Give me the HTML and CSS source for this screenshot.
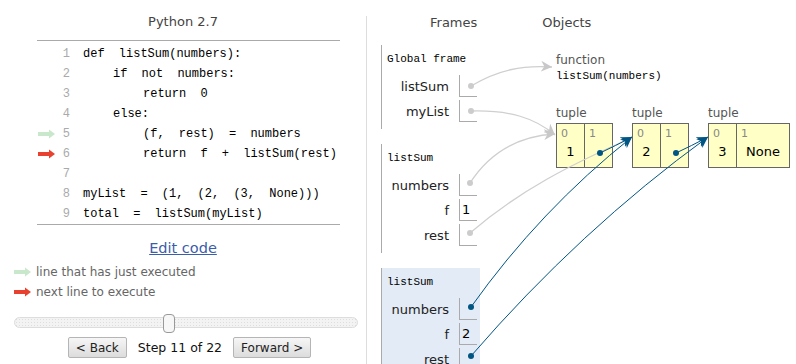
FILE: index.html
```html
<!DOCTYPE html>
<html lang="en">
<head>
    <meta charset="UTF-8">
    <title>Python Tutor - listSum</title>
    <link rel="stylesheet" href="styles.css">
</head>
<body>
    <div class="page">
        <section class="code-panel">
            <div class="lang">Python 2.7</div>

            <div class="code">
                <div class="line"><span class="mark"></span><span class="num">1</span><span class="src">def listSum(numbers):</span></div>
                <div class="line"><span class="mark"></span><span class="num">2</span><span class="src in1">if not numbers:</span></div>
                <div class="line"><span class="mark"></span><span class="num">3</span><span class="src in2">return 0</span></div>
                <div class="line"><span class="mark"></span><span class="num">4</span><span class="src in1">else:</span></div>
                <div class="line">
                    <span class="mark">
                        <svg width="17" height="10" viewBox="0 0 17 10"><rect x="0" y="3" width="12" height="4" fill="#c9e7cb"/><path d="M11 0.5 L17 5 L11 9.5 Z" fill="#c9e7cb"/></svg>
                    </span><span class="num">5</span><span class="src in2">(f, rest) = numbers</span>
                </div>
                <div class="line">
                    <span class="mark">
                        <svg width="17" height="10" viewBox="0 0 17 10"><rect x="0" y="3" width="12" height="4" fill="#e8412f"/><path d="M11 0.5 L17 5 L11 9.5 Z" fill="#e8412f"/></svg>
                    </span><span class="num">6</span><span class="src in2">return f + listSum(rest)</span>
                </div>
                <div class="line"><span class="mark"></span><span class="num">7</span><span class="src"></span></div>
                <div class="line"><span class="mark"></span><span class="num">8</span><span class="src">myList = (1, (2, (3, None)))</span></div>
                <div class="line"><span class="mark"></span><span class="num">9</span><span class="src">total = listSum(myList)</span></div>
            </div>

            <div class="edit"><a href="#">Edit code</a></div>

            <div class="legend">
                <div class="legend-row">
                    <svg width="17" height="10" viewBox="0 0 17 10"><rect x="0" y="3" width="12" height="4" fill="#c9e7cb"/><path d="M11 0.5 L17 5 L11 9.5 Z" fill="#c9e7cb"/></svg>
                    <span>line that has just executed</span>
                </div>
                <div class="legend-row">
                    <svg width="17" height="10" viewBox="0 0 17 10"><rect x="0" y="3" width="12" height="4" fill="#e8412f"/><path d="M11 0.5 L17 5 L11 9.5 Z" fill="#e8412f"/></svg>
                    <span>next line to execute</span>
                </div>
            </div>

            <div class="slider">
                <div class="handle"></div>
            </div>

            <div class="nav">
                <button class="btn">&lt; Back</button>
                <span class="step">Step 11 of 22</span>
                <button class="btn">Forward &gt;</button>
            </div>
        </section>

        <div class="divider"></div>

        <section class="viz">
            <div class="viz-head">
                <span class="head-frames">Frames</span>
                <span class="head-objects">Objects</span>
            </div>

            <div class="frames">
                <div class="frame">
                    <div class="frame-title">Global frame</div>
                    <div class="var"><span class="var-name">listSum</span><span class="var-val"></span></div>
                    <div class="var"><span class="var-name">myList</span><span class="var-val"></span></div>
                </div>

                <div class="frame">
                    <div class="frame-title">listSum</div>
                    <div class="var"><span class="var-name">numbers</span><span class="var-val"></span></div>
                    <div class="var"><span class="var-name">f</span><span class="var-val">1</span></div>
                    <div class="var"><span class="var-name">rest</span><span class="var-val"></span></div>
                </div>

                <div class="frame active">
                    <div class="frame-title">listSum</div>
                    <div class="var"><span class="var-name">numbers</span><span class="var-val"></span></div>
                    <div class="var"><span class="var-name">f</span><span class="var-val">2</span></div>
                    <div class="var"><span class="var-name">rest</span><span class="var-val"></span></div>
                </div>
            </div>

            <!-- heap objects sit on the free canvas -->
            <div class="obj func-obj">
                <div class="type-label">function</div>
                <div class="func-sig">listSum(numbers)</div>
            </div>

            <div class="obj tuple-obj t1">
                <div class="type-label">tuple</div>
                <div class="tuple">
                    <div class="tcell"><div class="idx">0</div><div class="tval">1</div></div>
                    <div class="tcell"><div class="idx">1</div><div class="tval"></div></div>
                </div>
            </div>

            <div class="obj tuple-obj t2">
                <div class="type-label">tuple</div>
                <div class="tuple">
                    <div class="tcell"><div class="idx">0</div><div class="tval">2</div></div>
                    <div class="tcell"><div class="idx">1</div><div class="tval"></div></div>
                </div>
            </div>

            <div class="obj tuple-obj t3">
                <div class="type-label">tuple</div>
                <div class="tuple">
                    <div class="tcell"><div class="idx">0</div><div class="tval">3</div></div>
                    <div class="tcell wide"><div class="idx">1</div><div class="tval">None</div></div>
                </div>
            </div>

            <svg class="arrows" width="429" height="364" viewBox="367 0 429 364">
                <defs>
                    <marker id="headGrey" viewBox="0 0 10 10" refX="10" refY="5" markerWidth="11" markerHeight="11" markerUnits="userSpaceOnUse" orient="auto">
                        <path d="M0 0 L10 5 L0 10 L3 5 Z" fill="#c8c8c8"/>
                    </marker>
                    <marker id="headBlue" viewBox="0 0 10 10" refX="10" refY="5" markerWidth="11" markerHeight="11" markerUnits="userSpaceOnUse" orient="auto">
                        <path d="M0 0 L10 5 L0 10 L3 5 Z" fill="#005583"/>
                    </marker>
                </defs>

                <!-- pointers that are no longer current -->
                <g fill="none" stroke="#cfcfcf" stroke-width="1.3">
                    <path d="M471 86 C498 70 522 65 552 67" marker-end="url(#headGrey)"/>
                    <path d="M471 111 C510 110 535 118 555 135" marker-end="url(#headGrey)"/>
                    <path d="M470 183 C490 152 520 136 555 134" marker-end="url(#headGrey)"/>
                    <path d="M470 233 C520 190 570 165 631 138"/>
                </g>
                <g fill="#cccccc">
                    <circle cx="471" cy="86" r="3"/>
                    <circle cx="471" cy="111" r="3"/>
                    <circle cx="470" cy="183" r="3"/>
                    <circle cx="470" cy="233" r="3"/>
                </g>

                <!-- pointers from the current frame -->
                <g fill="none" stroke="#005583" stroke-width="1">
                    <path d="M600 153 Q615 146 632 137" marker-end="url(#headBlue)"/>
                    <path d="M676 153 Q691 146 708 137" marker-end="url(#headBlue)"/>
                    <path d="M471 307 Q540 210 632 137" marker-end="url(#headBlue)"/>
                    <path d="M471 356 Q580 230 708 137" marker-end="url(#headBlue)"/>
                </g>
                <g fill="#005583">
                    <circle cx="600" cy="153" r="3"/>
                    <circle cx="676" cy="153" r="3"/>
                    <circle cx="471" cy="307" r="3"/>
                    <circle cx="471" cy="356" r="3"/>
                </g>
            </svg>
        </section>
    </div>
</body>
</html>
```

FILE: styles.css
```css
* {
    margin: 0;
    padding: 0;
    box-sizing: border-box;
}

body {
    font-family: 'DejaVu Sans', Verdana, sans-serif;
    background: white;
    color: #000;
    width: 796px;
    height: 364px;
    overflow: hidden;
}

.page {
    display: flex;
    height: 364px;
}

/* ---- code panel ---- */

.code-panel {
    width: 366px;
    flex-shrink: 0;
}

.lang {
    padding-top: 14px;
    font-size: 13px;
    line-height: 16px;
    text-align: center;
    color: #444;
}

.code {
    margin: 10px 26px 0 37px;
    padding-top: 3px;
    border-top: 1px solid #aaa;
    border-bottom: 1px solid #aaa;
    font-family: 'Liberation Mono', monospace;
    font-size: 12px;
}

.line {
    display: flex;
    align-items: center;
    height: 20px;
    white-space: pre;
}

.mark {
    width: 21px;
    height: 20px;
    display: flex;
    align-items: center;
    padding-left: 1px;
}

.num {
    width: 12px;
    text-align: right;
    color: #aaa;
}

.src {
    padding-left: 13px;
    word-spacing: 7px;
}

.src.in1 {
    padding-left: 43px;
}

.src.in2 {
    padding-left: 73px;
}

.edit {
    margin-top: 14px;
    text-align: center;
    font-size: 14.5px;
    line-height: 18px;
}

.edit a {
    color: #3b5dab;
}

.legend {
    margin-top: 5px;
    padding-left: 14px;
    font-size: 12px;
    color: #666;
}

.legend-row {
    display: flex;
    align-items: center;
    gap: 5px;
    height: 20px;
}

.slider {
    position: relative;
    margin: 15px 0 0 14px;
    width: 344px;
    height: 11px;
    border: 1px solid #ddd;
    border-radius: 6px;
    background: #f3f3f3;
    background-image: radial-gradient(#dedede 0.6px, transparent 0.7px);
    background-size: 3px 3px;
}

.handle {
    position: absolute;
    left: 148px;
    top: -4px;
    width: 12px;
    height: 19px;
    border: 1px solid #999;
    border-radius: 4px;
    background: #f7f7f7;
}

.nav {
    margin-top: 9px;
    padding-left: 13px;
    display: flex;
    justify-content: center;
    align-items: center;
    gap: 11px;
}

.btn {
    height: 21px;
    padding: 0 7px;
    font-family: 'DejaVu Sans', Verdana, sans-serif;
    font-size: 12px;
    color: #222;
    border: 1px solid #b5b5b5;
    border-radius: 2px;
    background: linear-gradient(#f6f6f6, #dcdcdc);
}

.step {
    font-size: 12.5px;
    color: #111;
}

/* ---- visualization ---- */

.divider {
    width: 1px;
    margin-top: 16px;
    background: #ddd;
    flex-shrink: 0;
}

.viz {
    position: relative;
    flex: 1;
}

.viz-head {
    padding-top: 14px;
    display: flex;
    font-size: 13px;
    line-height: 18px;
    color: #444;
}

.head-frames {
    margin-left: 63px;
}

.head-objects {
    margin-left: 65px;
}

.frames {
    margin-top: 13px;
    padding-left: 14px;
}

.frame {
    width: 99px;
    border-left: 1px solid #aaa;
    padding: 6px 0 5px 0;
    margin-bottom: 15px;
}

.frame.active {
    background: #e2ebf6;
}

.frame-title {
    padding-left: 5px;
    font-family: 'Liberation Mono', monospace;
    font-size: 11px;
    line-height: 17px;
    margin-bottom: 6px;
}

.var {
    display: flex;
    align-items: center;
    height: 24px;
    margin-bottom: 1px;
}

.var-name {
    width: 67px;
    text-align: right;
    font-size: 13px;
    color: #222;
}

.var-val {
    margin-left: 10px;
    width: 18px;
    height: 22px;
    border-left: 1px solid #aaa;
    border-bottom: 1px solid #aaa;
    padding-left: 2px;
    font-size: 13px;
    line-height: 21px;
}

.obj {
    position: absolute;
}

.type-label {
    font-size: 12px;
    line-height: 14px;
    color: #555;
}

.func-obj {
    left: 189px;
    top: 53px;
}

.func-sig {
    margin-top: 2px;
    font-family: 'Liberation Mono', monospace;
    font-size: 11px;
    line-height: 14px;
}

.tuple-obj {
    top: 106px;
}

.tuple-obj.t1 {
    left: 189px;
}

.tuple-obj.t2 {
    left: 265px;
}

.tuple-obj.t3 {
    left: 341px;
}

.tuple {
    margin-top: 3px;
    display: flex;
    border: 1px solid #666;
    background: #ffffc6;
}

.tcell {
    width: 27px;
    padding: 3px 0 6px 0;
}

.tcell + .tcell {
    width: 28px;
    border-left: 1px solid #666;
}

.tcell.wide {
    width: 53px;
}

.idx {
    padding-left: 4px;
    font-size: 11px;
    line-height: 13px;
    color: #888;
}

.tval {
    height: 18px;
    margin-top: 3px;
    font-size: 13px;
    line-height: 18px;
    text-align: center;
}

.arrows {
    position: absolute;
    left: 0;
    top: 0;
    pointer-events: none;
}
```
